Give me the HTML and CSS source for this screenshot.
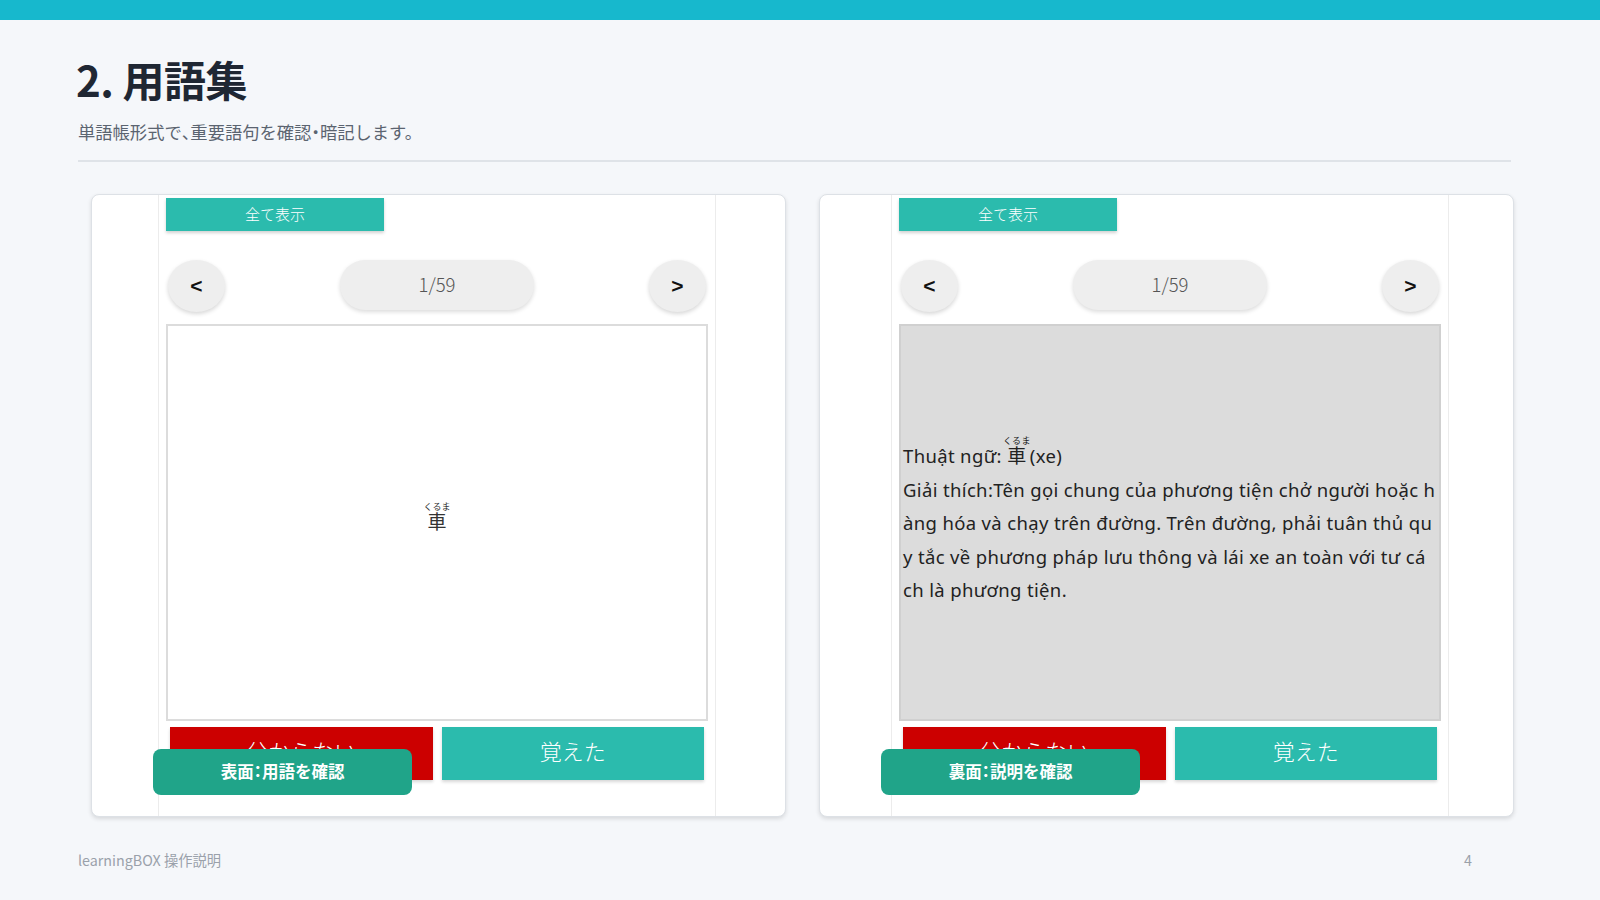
FILE: index.html
```html
<!DOCTYPE html>
<html lang="ja">
<head>
    <meta charset="UTF-8">
    <meta name="viewport" content="width=device-width, initial-scale=1.0">
    <title>2. 用語集 - learningBOX 操作説明</title>
    <link rel="stylesheet" href="styles.css">
</head>
<body>
    <div class="top-bar"></div>

    <main class="slide">
        <h1 class="slide-title">2. 用語集</h1>
        <p class="slide-lead">単語帳形式で<span class="pun">、</span>重要語句を確認<span class="pun">・</span>暗記します。</p>
        <hr class="slide-rule">

        <div class="shots">
            <!-- 表面 -->
            <section class="shot shot-front">
                <div class="flash">
                    <div class="btn-all">全て表示</div>
                    <div class="flash-nav">
                        <span class="nav-btn">&lt;</span>
                        <span class="nav-count">1/59</span>
                        <span class="nav-btn">&gt;</span>
                    </div>
                    <div class="flash-face flash-face-front">
                        <ruby class="term">車<rt>くるま</rt></ruby>
                    </div>
                    <div class="flash-actions">
                        <span class="act act-ng">分からない</span>
                        <span class="act act-ok">覚えた</span>
                    </div>
                </div>
                <div class="shot-label">表面<span class="pun">：</span>用語を確認</div>
            </section>

            <!-- 裏面 -->
            <section class="shot shot-back">
                <div class="flash">
                    <div class="btn-all">全て表示</div>
                    <div class="flash-nav">
                        <span class="nav-btn">&lt;</span>
                        <span class="nav-count">1/59</span>
                        <span class="nav-btn">&gt;</span>
                    </div>
                    <div class="flash-face flash-face-back">
                        <div class="desc">Thuật ngữ: <ruby class="term-inline">車<rt>くるま</rt></ruby>(xe)<br>Giải thích:Tên gọi chung của phương tiện chở người hoặc h<br>àng hóa và chạy trên đường. Trên đường, phải tuân thủ qu<br>y tắc về phương pháp lưu thông và lái xe an toàn với tư cá<br>ch là phương tiện.</div>
                    </div>
                    <div class="flash-actions">
                        <span class="act act-ng">分からない</span>
                        <span class="act act-ok">覚えた</span>
                    </div>
                </div>
                <div class="shot-label">裏面<span class="pun">：</span>説明を確認</div>
            </section>
        </div>
    </main>

    <footer class="slide-footer">
        <span>learningBOX 操作説明</span>
        <span>4</span>
    </footer>
</body>
</html>
```

FILE: styles.css
```css
* {
    margin: 0;
    padding: 0;
    box-sizing: border-box;
}

body {
    font-family: "Noto Sans", "Noto Sans CJK JP", sans-serif;
    background: #f5f7fa;
    color: #1f2733;
    width: 1600px;
    height: 900px;
    overflow: hidden;
}

.top-bar {
    height: 20px;
    background: #17b8cd;
}

.slide {
    padding: 34px 89px 0 78px;
}

.slide-title {
    font-family: "Noto Sans CJK JP", sans-serif;
    font-size: 42px;
    font-weight: 700;
    line-height: 50px;
    color: #1f2733;
    letter-spacing: -0.5px;
    margin-left: -2px;
}

.slide-lead {
    margin-top: 16px;
    font-family: "Noto Sans CJK JP", sans-serif;
    font-size: 17.3px;
    line-height: 24px;
    color: #5b6470;
}

/* 句読点は半角幅で詰める */
.pun {
    font-feature-settings: "halt";
}

.slide-rule {
    margin-top: 16px;
    border: none;
    height: 2px;
    background: #dfe3e8;
}

/* スクリーンショット2枚 */
.shots {
    display: grid;
    grid-template-columns: 695px 695px;
    gap: 33px;
    margin: 32px 0 0 13px;
}

.shot {
    position: relative;
    height: 623px;
    background: #fff;
    border: 1px solid #dde1e6;
    border-radius: 8px;
    box-shadow: 0 2px 4px rgba(0, 0, 0, 0.12);
    overflow: hidden;
}

.flash {
    width: 558px;
    height: 100%;
    margin-left: 66px;
    padding: 3px 7px 0;
    border-left: 1px solid #ececec;
    border-right: 1px solid #ececec;
}

.shot-back .flash {
    margin-left: 71px;
}

.btn-all {
    width: 218px;
    height: 33px;
    background: #2bbbad;
    color: #fff;
    font-family: "Noto Sans CJK JP", sans-serif;
    font-weight: 300;
    font-size: 15px;
    line-height: 31px;
    text-align: center;
    box-shadow: 0 2px 3px rgba(0, 0, 0, 0.18);
}

.flash-nav {
    display: flex;
    justify-content: space-between;
    align-items: flex-start;
    margin-top: 29px;
    padding: 0 2px;
}

.nav-btn {
    width: 57px;
    height: 52px;
    border-radius: 50%;
    background: #eeeeee;
    box-shadow: 0 2px 4px rgba(0, 0, 0, 0.16);
    display: flex;
    align-items: center;
    justify-content: center;
    font-family: "Liberation Sans", sans-serif;
    font-size: 21px;
    font-weight: 700;
    color: #111;
}

.nav-count {
    width: 194px;
    height: 50px;
    border-radius: 25px;
    background: #eeeeee;
    box-shadow: 0 2px 4px rgba(0, 0, 0, 0.14);
    display: flex;
    align-items: center;
    justify-content: center;
    padding-bottom: 2px;
    font-family: "Noto Sans CJK JP", sans-serif;
    font-weight: 300;
    font-size: 18.5px;
    color: #555;
}

.flash-face {
    margin-top: 12px;
    height: 397px;
    border: 2px solid #dcdcdc;
    background: #fff;
    display: flex;
    align-items: center;
    justify-content: center;
}

.flash-face-front {
    padding-bottom: 10px;
}

.flash-face-back {
    justify-content: flex-start;
    background: #dcdcdc;
    border-color: #d0d0d0;
    padding: 0 0 2px 2px;
}

.term {
    font-family: "Noto Sans CJK JP", sans-serif;
    font-size: 19px;
    color: #333;
    ruby-position: over;
}

.term rt,
.term-inline rt {
    font-size: 9px;
}

.desc {
    font-family: "Noto Sans", "Noto Sans CJK JP", sans-serif;
    font-size: 18.5px;
    letter-spacing: 0.35px;
    line-height: 33.5px;
    color: #222;
    white-space: nowrap;
}

.term-inline {
    font-family: "Noto Sans CJK JP", sans-serif;
    font-size: 19px;
    margin-right: 3px;
}

.flash-actions {
    display: grid;
    grid-template-columns: 1fr 1fr;
    gap: 9px;
    margin-top: 6px;
    padding: 0 4px;
}

.act {
    height: 53px;
    display: flex;
    align-items: center;
    justify-content: center;
    padding-bottom: 8px;
    font-family: "Noto Sans CJK JP", sans-serif;
    font-weight: 300;
    font-size: 22px;
    color: #fff;
    box-shadow: 0 2px 3px rgba(0, 0, 0, 0.16);
}

.act-ng {
    background: #cc0000;
}

.act-ok {
    background: #2bbbad;
}

/* 注釈ラベル */
.shot-label {
    position: absolute;
    left: 61px;
    top: 554px;
    width: 259px;
    height: 46px;
    border-radius: 8px;
    background: #20a489;
    color: #fff;
    font-family: "Noto Sans CJK JP", sans-serif;
    font-weight: 700;
    font-size: 16.5px;
    display: flex;
    align-items: center;
    justify-content: center;
    padding-bottom: 3px;
}

.slide-footer {
    display: flex;
    justify-content: space-between;
    padding: 0 128px 0 78px;
    margin-top: 33px;
    font-family: "Noto Sans CJK JP", sans-serif;
    font-size: 14.3px;
    line-height: 20px;
    color: #9aa1aa;
}
```
